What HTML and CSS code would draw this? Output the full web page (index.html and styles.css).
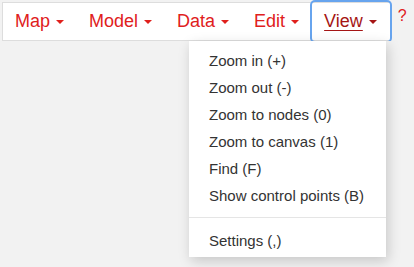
FILE: index.html
```html
<!DOCTYPE html>
<html>
    <head>
        <meta charset="utf-8">
        <title>Map editor</title>
        <link rel="stylesheet" href="styles.css">
    </head>
    <body>
        <div class="topbar">
            <ul class="menubar">
                <li class="menu"><a href="#">Map <span class="caret"></span></a></li>
                <li class="menu"><a href="#">Model <span class="caret"></span></a></li>
                <li class="menu"><a href="#">Data <span class="caret"></span></a></li>
                <li class="menu"><a href="#">Edit <span class="caret"></span></a></li>
                <li class="menu"><a href="#" class="focused">View <span class="caret"></span></a></li>
            </ul>
            <a href="#" class="help">?</a>
        </div>
        <div class="view_items">
            <p class="item">Zoom in (+)</p>
            <p class="item">Zoom out (-)</p>
            <p class="item">Zoom to nodes (0)</p>
            <p class="item">Zoom to canvas (1)</p>
            <p class="item">Find (F)</p>
            <p class="item">Show control points (B)</p>
            <hr class="sep">
            <p class="item">Settings (,)</p>
        </div>
    </body>
</html>
```

FILE: styles.css
```css
body{
    margin: 0; background-color: #f2f2f2; font-family: "Liberation Sans", Arial, sans-serif;
}
a{
    text-decoration: none;
}
ul{
    list-style: none; margin: 0; padding: 0;
}
.topbar{
    display: flex; align-items: flex-start; padding: 2px 0 0 2px;
}
.menubar{
    display: flex; background-color: #fff; border: 1px solid #dddddd; height: 37px;
}
.menu > a{
    display: flex; align-items: center; height: 37px; padding: 0 13px 0 12px; box-sizing: border-box;
    font-size: 18px; color: #e0201c;
}
.caret{
    display: inline-block; margin-left: 6px; width: 0; height: 0;
    border-top: 4px solid; border-left: 4px solid transparent; border-right: 4px solid transparent;
}
.menu > a.focused{
    color: #a51515; border-radius: 3px; box-shadow: 0 0 0 2px #67a4ee; margin-top: -1px; height: 39px;
    text-decoration: underline; text-underline-offset: 3px;
}
.view_items{
    position: absolute; top: 41px; left: 189px; width: 197px; background-color: #fff;
    padding: 6px 0 3px; box-shadow: 2px 4px 12px rgba(0, 0, 0, 0.18);
}
.item{
    margin: 0; padding: 0 20px; line-height: 27px; font-size: 15px; color: #333;
    white-space: nowrap;
}
.sep{
    border: 0; height: 1px; margin: 8px 0 9px; background-color: #e5e5e5;
}
.help{
    margin: 5px 0 0 7px; font-size: 16px; color: #e0201c;
}
```
